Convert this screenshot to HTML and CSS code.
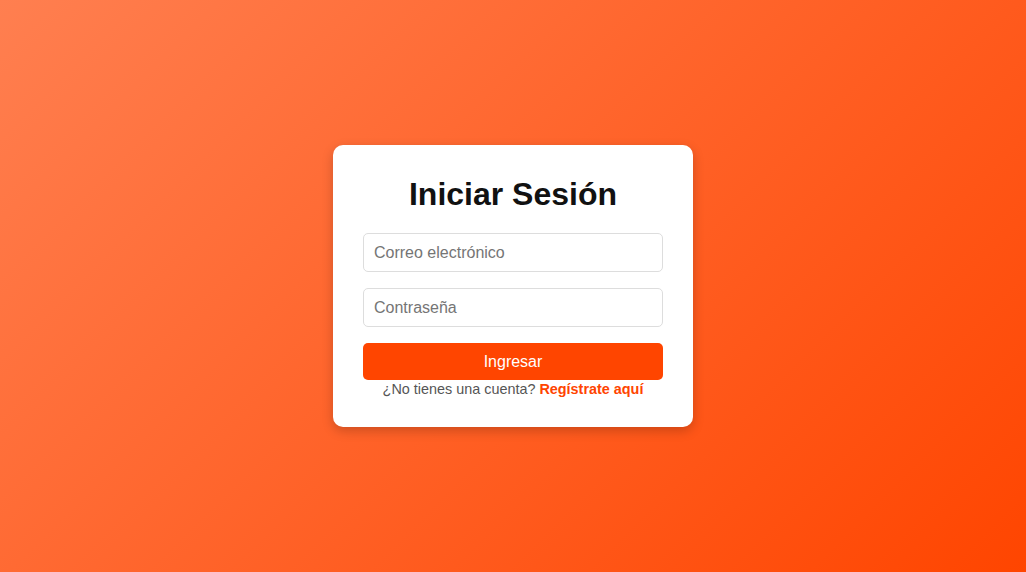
FILE: index.html
```html
<!DOCTYPE html>
<html lang="es">
<head>
<meta charset="utf-8">
<title>Iniciar Sesión</title>
<link rel="stylesheet" href="styles.css">
</head>
<body>
<main class="page">
  <form class="card">
    <h1 class="title">Iniciar Sesión</h1>
    <input class="field" type="email" placeholder="Correo electrónico">
    <input class="field" type="password" placeholder="Contraseña">
    <button class="submit" type="button">Ingresar</button>
    <p class="note">¿No tienes una cuenta? <a class="link" href="#">Regístrate aquí</a></p>
  </form>
</main>
</body>
</html>
```
FILE: styles.css
```css
html, body {
  margin: 0;
  padding: 0;
  height: 100%;
}
body {
  font-family: "Liberation Sans", Arial, sans-serif;
  background: linear-gradient(135deg, #ff7f50 0%, #ff4500 100%);
}
.page {
  height: 100vh;
  display: flex;
  align-items: center;
  justify-content: center;
}
.card {
  width: 300px;
  padding: 31px 30px 30px;
  background: #fff;
  border-radius: 10px;
  box-shadow: 0 4px 12px rgba(0, 0, 0, 0.2);
  display: flex;
  flex-direction: column;
}
.title {
  margin: 0 0 20px;
  font-size: 32px;
  line-height: 37px;
  font-weight: 700;
  text-align: center;
  color: #111;
}
.field {
  box-sizing: border-box;
  width: 100%;
  height: 39px;
  margin: 0 0 16px;
  padding: 0 10px;
  border: 1px solid #ddd;
  border-radius: 5px;
  font-family: inherit;
  font-size: 16px;
  color: #333;
  outline: none;
}
.field::placeholder {
  color: #757575;
}
.submit {
  height: 37px;
  border: none;
  border-radius: 5px;
  background: #ff4500;
  color: #fff;
  font-family: inherit;
  font-size: 16px;
  cursor: pointer;
}
.note {
  margin: 1px 0 0;
  font-size: 14.4px;
  line-height: 16px;
  text-align: center;
  color: #555;
}
.link {
  color: #ff4500;
  font-weight: 700;
  text-decoration: none;
}
```
